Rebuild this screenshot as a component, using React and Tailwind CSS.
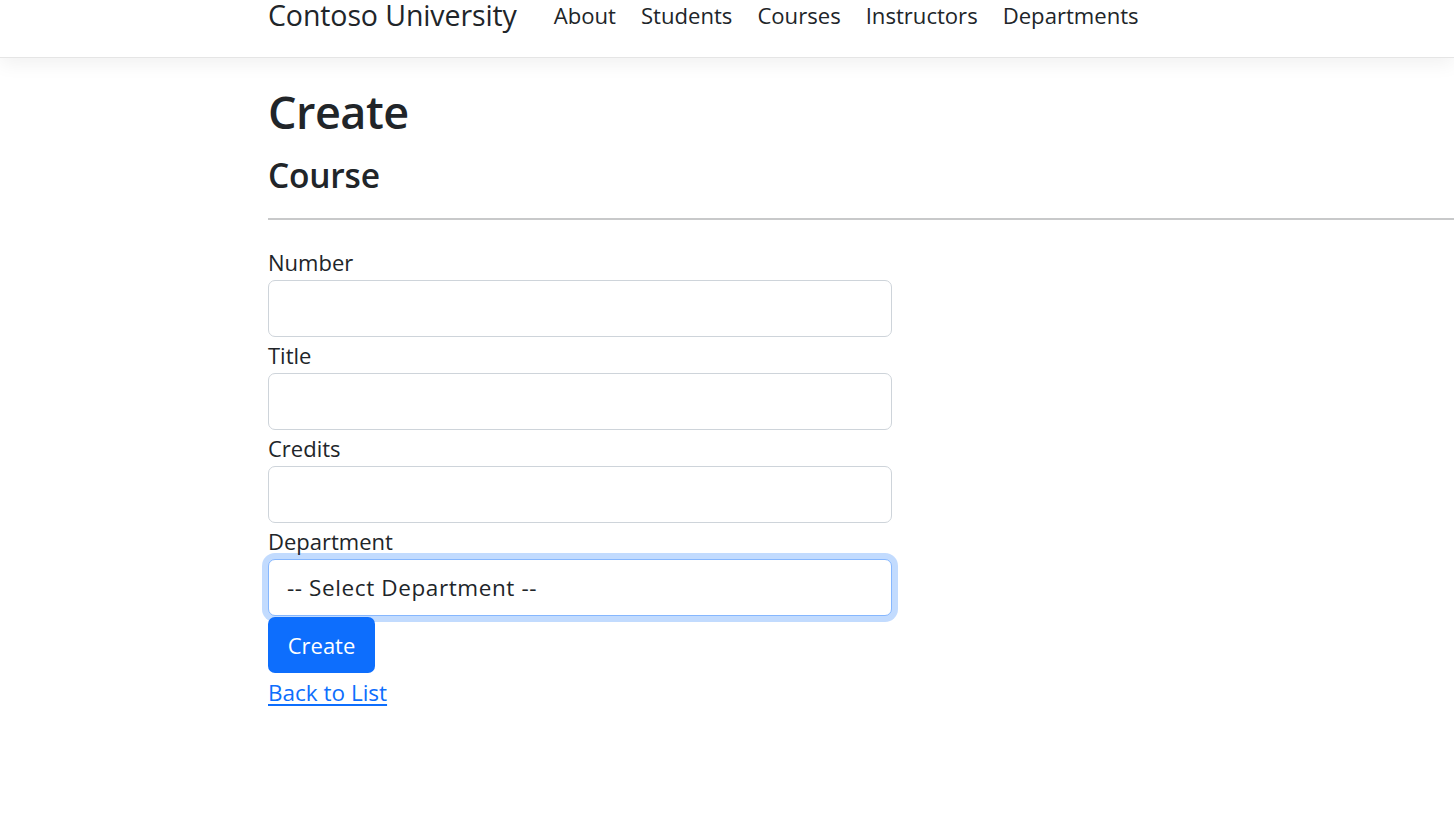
import { useState } from "react";

const navLinks = ["About", "Students", "Courses", "Instructors", "Departments"];

const fields = ["Number", "Title", "Credits"];

function App() {

  const [dept, setDept] = useState("");

  return (
    <div
      className="min-h-screen bg-white text-[#212529]"
      style={{ fontFamily: "'Open Sans', 'Noto Sans', sans-serif" }}
    >

      {/* ================= NAVBAR ================= */}

      <header className="h-[58px] border-b border-[#e5e5e5] bg-white shadow-[0_6px_18px_rgba(0,0,0,0.06)] overflow-hidden">
        <div className="h-[30px] flex items-center pl-[268px]">
          <a href="#" className="text-[28.5px] leading-none mr-[37px] tracking-[-0.1px]">
            Contoso University
          </a>
          <nav className="flex items-center gap-[25px] text-[22.1px] leading-none pt-px">
            {navLinks.map((link) => (
              <a key={link} href="#">
                {link}
              </a>
            ))}
          </nav>
        </div>
      </header>

      {/* ================= CONTENT ================= */}

      <main className="pl-[268px]">

        <h1 className="mt-[24px] h-[59px] text-[45px] font-semibold leading-[59px] tracking-[-0.5px]">
          Create
        </h1>

        <h4 className="mt-[13px] h-[42px] text-[33.5px] font-semibold leading-[42px] tracking-[-0.2px]">
          Course
        </h4>

        <hr className="mt-[22px] mb-[24px] border-0 h-[2px] bg-[#c8c9ca]" />

        <form className="w-[624px] text-[22px]">

          {fields.map((f) => (
            <div key={f}>
              <label className="block h-[36px] leading-[37px]">{f}</label>
              <input
                type="text"
                className="block w-full h-[57px] rounded-[7px] border border-[#ced4da] bg-white px-[18px] outline-none"
              />
            </div>
          ))}

          <div>
            <label className="block h-[36px] leading-[37px]">Department</label>
            <select
              value={dept}
              onChange={(e) => setDept(e.target.value)}
              className="block w-full h-[57px] appearance-none rounded-[7px] border border-[#86b7fe] bg-white px-[18px] text-[22.5px] text-[#212529] outline-none shadow-[0_0_0_6px_rgba(13,110,253,0.25)] tracking-[0.6px]"
            >
              <option value="">-- Select Department --</option>
            </select>
          </div>

          <button
            type="button"
            className="mt-px h-[56px] w-[107px] rounded-[7px] bg-[#0d6efd] text-white text-[22px]"
          >
            Create
          </button>

        </form>

        <div className="h-[40px] flex items-center">
          <a href="#" className="text-[22.5px] text-[#0d6efd] underline underline-offset-[3px]">
            Back to List
          </a>
        </div>

      </main>
    </div>
  );
}

export default App;
